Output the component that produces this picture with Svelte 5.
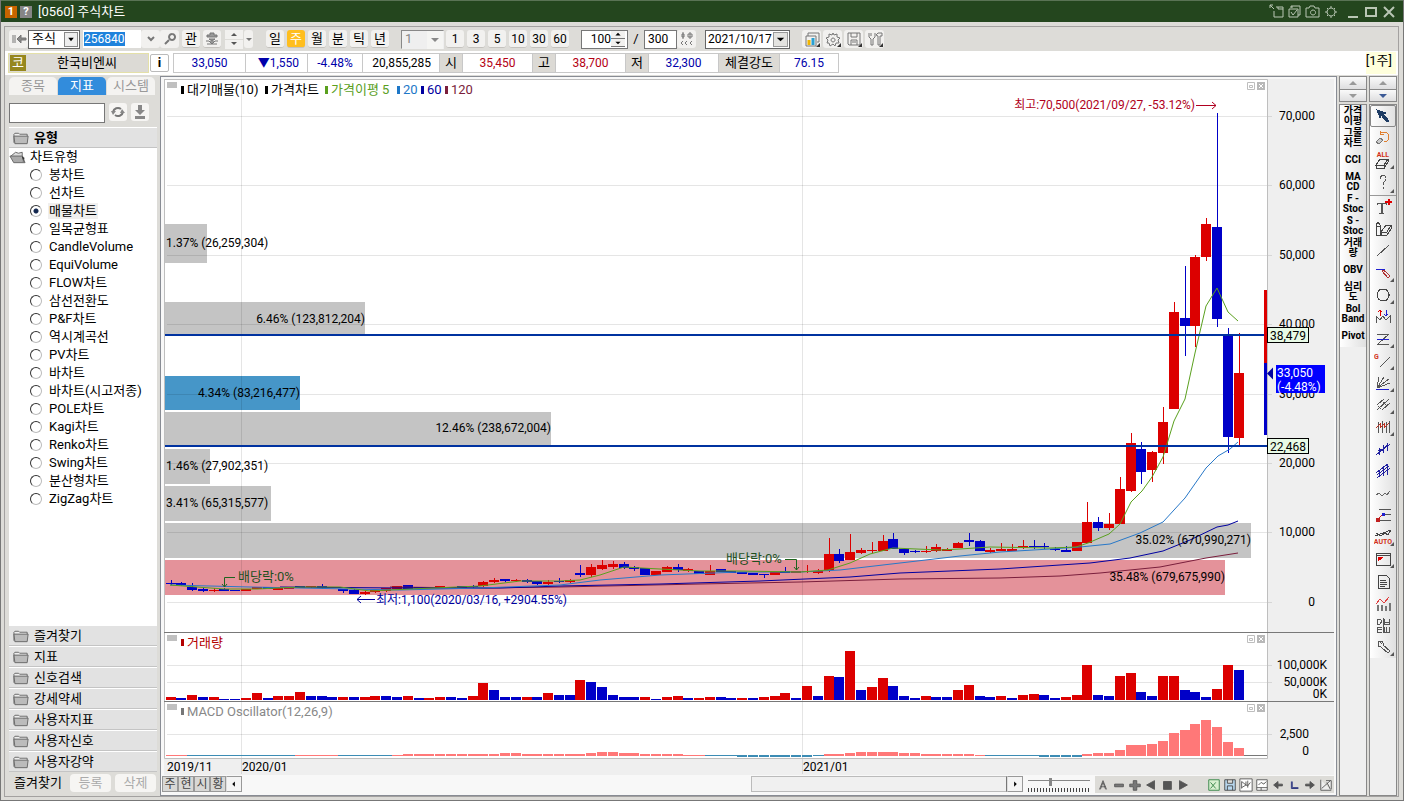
<script lang="ts">
	type Shape = [string, string, string?];
	type Tool = { name: string; shapes: Shape[]; more?: boolean; text?: string; textY?: number; active?: boolean };

	const RED = '#dc0000';
	const BLUE = '#0000c8';

	let selectedType = '매물차트';
	let code = '256840';
	let keyword = '';
	let barCount = '100';
	let maxCount = '300';
	let zoom = 36;

	const chartTypes = [
		'봉차트', '선차트', '매물차트', '일목균형표', 'CandleVolume', 'EquiVolume', 'FLOW차트',
		'삼선전환도', 'P&F차트', '역시계곡선', 'PV차트', '바차트', '바차트(시고저종)', 'POLE차트',
		'Kagi차트', 'Renko차트', 'Swing차트', '분산형차트', 'ZigZag차트'
	];
	const groups = ['즐겨찾기', '지표', '신호검색', '강세약세', '사용자지표', '사용자신호', '사용자강약'];
	const periods = ['일', '주', '월', '분', '틱', '년'];
	const minutes = ['1', '3', '5', '10', '30', '60'];
	const indicators = [
		'가격\n이평', '그물\n차트', 'CCI', 'MA\nCD', 'F -\nStoc', 'S -\nStoc', '거래\n량', 'OBV', '심리\n도', 'Bol\nBand', 'Pivot'
	];

	// colour, high, body top, body bottom, low
	const candles = `
B580,583,584,585 B582,583,585,586 B583,587,590,591 B588,589,591,592 R588,590,591,592
B588,589,591,591 B590,590,591,591 R589,589,591,591 R587,587,589,589 B587,587,589,589
R587,588,590,590 R587,587,589,589 B586,586,588,588 R586,586,587,588 B584,586,588,589
R587,587,588,588 B589,589,591,593 B589,590,594,594 R591,592,594,595 R590,590,592,593
R588,588,591,592 R586,586,589,589 B585,585,589,589 B587,587,588,588 R587,587,588,588
R586,586,588,588 B587,587,588,588 B586,586,588,588 B585,586,587,588 R581,582,586,587
R578,580,582,583 B579,579,581,582 R579,580,581,582 B579,580,582,583 B581,581,584,585
R580,582,584,585 B578,581,582,583 R579,580,582,583 B565,573,575,577 R564,567,575,577
R560,565,569,570 R561,564,567,569 B562,564,568,569 B566,567,569,571 B568,568,575,575
R571,571,575,575 R566,567,572,572 B564,567,570,572 R568,569,571,572 B571,571,574,574
R565,571,575,575 B569,569,572,572 B571,571,573,573 B572,572,574,574 B573,573,575,575
B574,574,575,578 R572,572,575,575 B567,571,573,573 R571,571,573,573 R565,571,572,573
R569,571,573,574 R538,554,570,572 B549,554,561,563 R534,552,560,560 R548,550,553,554
R542,550,551,553 R535,541,551,551 B533,539,549,549 B549,549,553,555 B550,551,552,553
R546,551,552,553 R544,547,551,552 R548,549,551,551 R542,543,548,548 B533,540,542,546
B540,541,551,551 R548,550,552,553 R543,549,551,551 R544,549,551,551 R540,546,548,549
B540,546,547,549 B543,546,547,549 B547,549,550,551 B546,550,552,552 R542,542,551,551
R502,522,543,543 B517,522,528,531 R513,524,528,530 R477,489,524,524 R433,443,491,492
B442,449,472,484 R451,452,470,482 R407,422,453,464 R302,312,409,409 B266,318,326,356
R255,257,326,347 R218,224,257,261 B113,227,319,327 B328,335,437,453 R333,373,438,445`
		.trim()
		.split(/\s+/)
		.map((s) => ({ up: s[0] === 'R', v: s.slice(1).split(',').map(Number) }));

	const volumes = `R3 B2 R5 B3 R3 B1 B1 R2 R7 B2 R4 R4 R8 B4 B4 B3 R3 B3 R3 R4 B4 B3 R4 B2 R2
R3 B3 B2 R4 R17 B10 B3 B3 R3 B3 R7 B5 B5 R20 B18 B13 B5 B3 B3 R3 B1 R3 R4 B2 R2
R3 B3 B2 R2 B2 R3 R4 R7 B2 R14 B4 R24 B23 R49 B10 R13 R22 B14 B4 B2 R4 B3 B3 R10 R15
B4 B3 R4 B2 R5 R6 B5 B2 R3 R5 R35 B5 B4 R24 R27 B8 B4 R24 R24 B10 B8 B3 R11 R35 B30`
		.split(/\s+/)
		.map((s) => ({ up: s[0] === 'R', h: +s.slice(1) }));

	// bar heights, negative below the zero line
	const oscillator = [
		1, 1, -1, -1, -1, -1, -1, -1, -1, -1, -1, -1, 1, 1, 1, 1, -1, -1, -1, -1,
		-1, 1, 2, 2, 2, 2, 2, 2, 2, 2, 2, 3, 3, 2, 2, 2, 2, 2, 2, 3,
		4, 4, 3, 3, 2, 2, 2, 2, 1, 1, -1, -1, -1, -2, -2, -2, -2, -2, -2, -2,
		-1, 2, 2, 3, 4, 4, 4, 4, 3, 3, 2, 2, 2, 2, 2, 1, -1, -1, -1, -1,
		-1, -2, -2, -2, -2, 2, 3, 3, 6, 11, 11, 12, 15, 23, 26, 32, 36, 29, 14, 8
	];

	const profile = [
		{ y: 224, h: 39, end: 207, text: '1.37% (26,259,304)', color: '#c4c4c4' },
		{ y: 302, h: 34, end: 365, text: '6.46% (123,812,204)', color: '#c4c4c4' },
		{ y: 376, h: 34, end: 300, text: '4.34% (83,216,477)', color: '#4696c8' },
		{ y: 412, h: 33, end: 551, text: '12.46% (238,672,004)', color: '#c4c4c4' },
		{ y: 449, h: 35, end: 210, text: '1.46% (27,902,351)', color: '#c4c4c4' },
		{ y: 486, h: 35, end: 271, text: '3.41% (65,315,577)', color: '#c4c4c4' },
		{ y: 523, h: 35, end: 1251, text: '35.02% (670,990,271)', color: '#c4c4c4' },
		{ y: 560, h: 35, end: 1225, text: '35.48% (679,675,990)', color: '#e4929a' }
	];

	const averages = [
		['#7a1e3c', '390,587 480,588 560,587 700,584 800,582 900,579 1000,578 1060,576 1100,573 1160,567 1206,558 1238,553'],
		['#0000a0', '280,587 400,588 500,588 560,586 660,584 760,581 850,577 900,573 1000,569 1090,563 1130,558 1163,551 1190,540 1217,527 1228,525 1238,521'],
		['#2878c8', '170,585 250,587 300,588 400,590 480,588 560,585 600,580 660,575 740,572 800,572 840,570 900,563 960,556 1000,552 1050,549 1080,547 1110,544 1140,533 1163,522 1185,498 1206,468 1218,456 1230,449 1238,442'],
		['#5aa01e', '170,585 224,589 257,589 300,587 340,587 370,591 410,589 480,586 520,581 560,581 580,580 600,575 624,567 660,569 700,571 740,571 800,572 828,570 850,563 870,554 893,548 940,550 960,549 990,547 1050,548 1076,547 1088,543 1109,534 1120,524 1131,502 1142,491 1152,477 1163,457 1174,421 1185,399 1195,353 1206,306 1217,288 1228,312 1238,321']
	];

	const legend = [
		{ x: 181, tx: 187, text: '대기매물(10)', color: '#000' },
		{ x: 265, tx: 271, text: '가격차트', color: '#000' },
		{ x: 325, tx: 331, text: '가격이평 5', color: '#5aa01e' },
		{ x: 397, tx: 403, text: '20', color: '#1e78c8' },
		{ x: 421, tx: 427, text: '60', color: '#0000a0' },
		{ x: 445, tx: 451, text: '120', color: '#7a1e3c' }
	];

	const prices = [70, 60, 50, 40, 30, 20, 10, 0].map((p, i) => ({
		text: p ? p + ',000' : '0',
		y: Math.round(116 + i * 69.4)
	}));

	const left = (i: number) => Math.round(165.5 + i * 10.788);

	const tools: Tool[] = [
		{ name: '선택', active: true, shapes: [['#1e3c64', 'M3 3l9 3-3 1 6 7-2 1-6-7-1 3z', '#1e3c64']] },
		{ name: '되돌리기', shapes: [['#e08030', 'M6 5a5 5 0 1 1 4 8M6 5l0-3M6 5l4 0'], ['#777', 'M2 13l4-4 3 2-4 4z', '#ccc']] },
		{ name: '전체 지우기', more: true, text: 'ALL', textY: 6, shapes: [['#444', 'M2 14l4-6h8l-4 6zM2 14v3h8v-3M10 17l4-6v-3']] },
		{ name: '도움말', more: true, shapes: [['#555', 'M6 6c0-5 7-4 6 0c0 2-3 2-3 6M9 14v2']] },
		{ name: '문자', shapes: [['#555', 'M3 7V5h9v2M7 5v10M8 5v10M5 15h5'], ['#e00000', 'M14 1v6M15 1v6M11 4h7M11 3h7']] },
		{ name: '지우개', shapes: [['#444', 'M2 5l2-3 2 3v10H2zM2 6h4M7 12l5-7h5l-4 7zM7 12v3h6l4-6V5']] },
		{ name: '추세선', shapes: [['#555', 'M3 14L15 3']] },
		{ name: '수평선', more: true, shapes: [['#2020d0', 'M2 5h9'], ['#b03030', 'M8 7l2-1 6 6-2 2zM9 9l2-2']] },
		{ name: '원', more: true, shapes: [['#444', 'M9 3a6 6 0 1 0 .1 0']] },
		{ name: '파동', shapes: [['#555', 'M2 15V8l4 4 3-4 3 4 4-4v7'], ['#e00000', 'M6 8V2M4 4l2-2 2 2'], ['#2020d0', 'M12 2v6M10 6l2 2 2-2']] },
		{ name: '회귀선', more: true, shapes: [['#555', 'M3 4h12M3 14h12M4 14L15 4'], ['#2020d0', 'M3 9h12']] },
		{ name: '각도선', more: true, text: 'G', textY: 7, shapes: [['#555', 'M6 15L16 5']] },
		{ name: '부채선', more: true, shapes: [['#555', 'M3 14L5 3M3 14L10 3M3 14L15 5M3 14L16 9'], ['#2020d0', 'M2 15h13']] },
		{ name: '평행선', more: true, shapes: [['#555', 'M3 9l7-6M3 14L15 3M8 14l8-7M4 10l3 3M9 6l3 3']] },
		{ name: '시간대', more: true, shapes: [['#555', 'M4 4v11M8 3v12M12 4v11M15 3v12'], ['#c03020', 'M2 10l4-4v4l4-4v4l5-5']] },
		{ name: '채널', shapes: [['#2020a0', 'M2 15L16 4M5 8v7M9 5v8M13 3v8M4 11l5-2 5-5']] },
		{ name: '이중 채널', shapes: [['#2020a0', 'M2 11L14 2M3 16L16 6M5 8v7M9 4v10M13 3v10M3 13L15 4']] },
		{ name: '지그재그', shapes: [['#666', 'M2 11l3-2 3 3 3-3 2 2 3-4']] },
		{ name: '되돌림', shapes: [['#555', 'M5 3h12M9 8h8M6 14h11'], ['#2020d0', 'M8 7h2v2H8z', '#2020d0'], ['#c02020', 'M2 12h3v3H2zM5 12l3-3', '#c02020']] },
		{ name: '자동 추세', more: true, text: 'AUTO', textY: 16, shapes: [['#444', 'M1 8l8-3 8-3M2 5l3 2 3 0 3-2 3 2 3-5']] },
		{ name: '창', more: true, shapes: [['#444', 'M2 3h14v12H2zM2 5h14'], ['#e00000', 'M4 7h5l-5 4z', '#e00000']] },
		{ name: '메모', shapes: [['#444', 'M5 3h7l3 3v10H4V5zM6 8h6M6 10h7M6 12h7M6 14h5']] },
		{ name: '통계', shapes: [['#777', 'M3 11h1v5h-1zM7 11h1v5h-1zM11 12h1v4h-1zM15 9h1v7h-1z', '#777'], ['#e04040', 'M2 10l4-5 4 4 5-6']] },
		{ name: '일주월', shapes: [['#555', 'M3 3h3l2 2-2 3H3zM10 3v5h5V3M10 6h5M3 11h5M3 13h5M3 16h5M3 11v5M10 11v5h5v-5M12 11v5M9 2v15']] },
		{ name: '설정', more: true, shapes: [['#555', 'M7 3a3 3 0 1 0 0 6l7 6 2-2-7-6a3 3 0 0 0-2-4zM5 3l3 3']] }
	];

	const topIcons: [string, string][] = [
		['내보내기', 'M1 1l4 4M1 1h3M1 1v3M5 7v6h9V3H7M9 3v2h5'],
		['복사', 'M4 4V2h9v9h-2M2 5h9v8H2zM4 8l2 3 4-5M5 2v2'],
		['캡처', 'M1 4h3l1-2h4l1 2h4v9H1zM8 6a2.5 2.5 0 1 0 .1 0'],
		['설정', 'M8 4a4 4 0 1 0 .1 0M8 2v2M8 12v2M2 8h2M12 8h2M4 4l1 1M11 11l1 1M12 4l-1 1M5 11l-1 1']
	];

	const setupIcons: [string, string][] = [
		['차트 목록', 'M4 5V2h11v9h-2M2 5h10v10H2z'],
		['환경 설정', 'M8 2l1 2 3-1v3l3 1-2 2 1 3h-3l-1 3-2-2-3 2-1-3H2l1-3-2-2 3-1V3l3 1zM8 7a2 2 0 1 0 .1 0'],
		['저장', 'M2 2h12v12H3l-1-1zM5 2v4h6V2M5 14V9h6v5M6 11h4'],
		['도구', 'M2 2v4l2 2v6h2V8l2-2V2M4 2v3M9 4l2-2h4v3h-2v9h-2V5z']
	];

	const navIcons: [string, string, string][] = [
		['글자', 'M4 13L8 3l4 10M6 10h5M5 13L8 5l3 8', 'none'],
		['축소', 'M3 7h10v3H3z', '#777'],
		['확대', 'M6 3h4v4h4v3h-4v4H6v-4H2V7h4z', '#777'],
		['이전', 'M12 3v10L3 8z', '#555'],
		['정지', 'M4 4h9v9H4z', '#555'],
		['재생', 'M4 3v10l9-5z', '#555']
	];
	const fileIcons: Shape[] = [
		['#2f8040', 'M2 2h12v12H2zM4 5l6 7M10 5l-6 7', '#d8f0d0'],
		['#444', 'M2 2h12v12H2zM5 2v4h6V2M5 14V9h6v5', '#b8d8f0'],
		['#555', 'M1 1h14v14H1zM3 12V4l5 4V4M10 3v8M3 11l5-3 2 1 3-4', '#fff'],
		['#555', 'M2 2h12v12H2zM2 11h12M7 11v3M4 8l3-3 3 2 3-3', '#fff'],
		['#555', 'M8 4L3 8l5 4V9h5V7H8z', '#555'],
		['#1e2878', 'M5 4v8h8M6 4v7h7', 'none'],
		['#555', 'M8 4l5 4-5 4V9H3V7h5z', '#555'],
		['#555', 'M2 2v12h12M3 12L13 3M8 3h6v10M9 5l4 8', '#eee']
	];
</script>

<div class="window">
	<header class="titlebar">
		<span class="badge num">1</span>
		<span class="badge help">?</span>
		<h1>[0560] 주식차트</h1>
		<div class="window-controls">
			{#each topIcons as [name, d]}
				<button aria-label={name}><svg viewBox="0 0 16 16"><path {d} /></svg></button>
			{/each}
			<button class="wide" aria-label="최소화"><svg viewBox="0 0 16 16"><path d="M3 13h10" stroke-width="2" /></svg></button>
			<button class="wide" aria-label="최대화"><svg viewBox="0 0 16 16"><path d="M3 4h10v8H3z" stroke-width="2" /></svg></button>
			<button class="wide" aria-label="닫기"><svg viewBox="0 0 16 16"><path d="M3 3l10 10M13 3L3 13" stroke-width="2" /></svg></button>
		</div>
	</header>

	<main class="frame">
		<div class="toolbar">
			<button class="flat" aria-label="처음으로"><svg viewBox="0 0 16 16"><path d="M2 4v8M4 4v8M6 8l4-4v3h5v2h-5v3z" fill="#888" /></svg></button>
			<span class="combo market">
				<select aria-label="종목 구분"><option>주식</option></select>
				<svg class="arrow boxed" viewBox="0 0 12 14"><path d="M3 5h6l-3 4z" /></svg>
			</span>
			<span class="code"><input aria-label="종목 코드" bind:value={code} style:width="{code.length * 6 + 2}px" /></span>
			<button class="flat" aria-label="종목 목록"><svg viewBox="0 0 16 16"><path d="M5 6l3 3 3-3" stroke-width="2" /></svg></button>
			<button class="flat" aria-label="종목 찾기"><svg viewBox="0 0 16 16"><path d="M10 3a3 3 0 1 0 .1 0M7 9l-4 4" stroke-width="2" /></svg></button>
			<button class="key gap">관</button>
			<button class="key" aria-label="종목 정보"><svg viewBox="0 0 16 16"><path d="M6 2h4v2h3v2H3V4h3zM5 8h6l-3 2zM2 10h3l3 3 3-3h3M3 13h10" fill="#999" /></svg></button>
			<span class="steps">
				<button aria-label="이전 종목"><svg viewBox="0 0 16 8"><path d="M5 6h6L8 3z" fill="#555" /></svg></button>
				<button aria-label="다음 종목"><svg viewBox="0 0 16 8"><path d="M5 2h6L8 5z" fill="#555" /></svg></button>
			</span>
			<button class="narrow" aria-label="종목 이동 옵션"><svg viewBox="0 0 8 16"><path d="M1 7h6L4 10z" fill="#777" /></svg></button>

			<div class="keys">
				{#each periods as period}
					<button class="key" class:on={period === '주'}>{period}</button>
				{/each}
			</div>
			<span class="combo unit">
				<select aria-label="주기" disabled><option>1</option></select>
				<svg class="arrow" viewBox="0 0 14 15"><path d="M3 6h8l-4 4z" /></svg>
			</span>
			<div class="keys minutes">
				{#each minutes as minute}
					<button class="key">{minute}</button>
				{/each}
			</div>
			<span class="spinner">
				<input aria-label="표시 개수" bind:value={barCount} />
				<span class="spin">
					<button aria-label="늘리기"><svg viewBox="0 0 14 8"><path d="M4 5h6L7 2z" /></svg></button>
					<button aria-label="줄이기"><svg viewBox="0 0 14 8"><path d="M4 3h6L7 6z" /></svg></button>
				</span>
			</span>
			<span class="slash">/</span>
			<input class="max" aria-label="전체 개수" bind:value={maxCount} />
			<button class="flat" aria-label="봉 더보기"><svg viewBox="0 0 16 16"><path d="M4 1v7M3 3h2v3H3zM11 1v7M9 3h4v3H9zM4 10l-2 2 2 2M8 10l-2 2 2 2M13 10l-2 2 2 2" /></svg></button>
			<span class="combo date">
				<select aria-label="기준일"><option>2021/10/17</option></select>
				<svg class="arrow raised" viewBox="0 0 14 14"><path d="M3 5h8l-4 4z" /></svg>
			</span>
			<div class="setup">
				{#each setupIcons as [name, d], i}
					<button class="flat" aria-label={name}>
						<svg viewBox="0 0 16 16">
							<path {d} />
							{#if i === 0}<path class="gold" d="M5 14V9" /><path class="cyan" d="M9 14V7" />{/if}
							<path class="corner" d="M16 12v4h-4z" />
						</svg>
					</button>
				{/each}
			</div>
		</div>

		<div class="quote">
			<div class="stock"><span class="market-mark">코</span><strong>한국비엔씨</strong></div>
			<button class="info" aria-label="종목 상세">i</button>
			<table>
				<tbody>
					<tr>
						<td class="c72 down">33,050</td>
						<td class="c62 down end">▼1,550</td>
						<td class="c55 down">-4.48%</td>
						<td class="c77 end">20,855,285</td>
						<th scope="row">시</th>
						<td class="c70 up">35,450</td>
						<th scope="row">고</th>
						<td class="c70 up">38,700</td>
						<th scope="row">저</th>
						<td class="c70 down">32,300</td>
						<th scope="row" class="c61">체결강도</th>
						<td class="c59 down">76.15</td>
					</tr>
				</tbody>
			</table>
			<span class="period">[1주]</span>
		</div>

		<div class="body">
			<aside class="sidebar">
				<nav class="tabs">
					<button>종목</button>
					<button class="active">지표</button>
					<button>시스템</button>
				</nav>
				<div class="search">
					<input aria-label="지표 검색" bind:value={keyword} />
					<button aria-label="새로고침"><svg viewBox="0 0 16 16"><path d="M3 8a5 5 0 0 1 8-3M13 8a5 5 0 0 1-8 3" stroke-width="2" /><path class="solid" d="M1 7h5l-3 4zM10 9h5l-3-4z" /></svg></button>
					<button aria-label="내려받기"><svg viewBox="0 0 16 16"><path class="solid" d="M6 1h4v5h3l-5 5-5-5h3zM3 12h10v3H3z" /></svg></button>
				</div>
				<h2 class="group">
					{@render folder()}유형
				</h2>
				<div class="tree">
					<div class="root">
						<svg class="folder" viewBox="0 0 18 14"><path d="M2 6l5-4 3 1 4-1v4" fill="#ddd" /><path d="M1 6h13l3 7H5z" fill="#aaa" /><path d="M14 6l2 2-1 4" /></svg>
						차트유형
					</div>
					{#each chartTypes as type}
						<label class:picked={type === selectedType}>
							<input type="radio" name="chart-type" value={type} bind:group={selectedType} />
							<span>{type}</span>
						</label>
					{/each}
				</div>
				{#each groups as group}
					<button class="group">{@render folder()}{group}</button>
				{/each}
				<div class="favorite">
					<span>즐겨찾기</span>
					<button disabled>등록</button>
					<button disabled>삭제</button>
				</div>
			</aside>

			<section class="chart">
				<svg class="plot" viewBox="164 79 1170 696" role="img" aria-label="한국비엔씨 주봉 차트">
					<rect x="164" y="79" width="1170" height="696" fill="#efefef" />
					<rect x="165" y="80" width="1102" height="678" fill="#fff" />

					<!-- volume profile -->
					{#each profile as p}
						<rect x="165" y={p.y} width={p.end - 165} height={p.h} fill={p.color} />
					{/each}

					<g class="grid">
						<path d="M241.5 80V774M802.5 80V774" />
						{#each prices as p}
							<path d="M167 {p.y + 0.5}H1272" />
						{/each}
						<path d="M167 665.5H1272M167 682.5H1272M167 734.5H1272" />
					</g>
					<path class="edge" d="M164.5 79V758.5H1267.5V79.5H164" />
					<path class="split" d="M164 632.5H1334M164 701.5H1334" />

					<g shape-rendering="crispEdges">
						{#each candles as c, i}
							<rect x={left(i) + 5} y={c.v[0]} width="1" height={c.v[3] - c.v[0]} fill={c.up ? RED : BLUE} />
							<rect x={left(i)} y={c.v[1]} width="10" height={c.v[2] - c.v[1]} fill={c.up ? RED : BLUE} />
						{/each}
						{#each volumes as v, i}
							<rect x={left(i)} y={700 - v.h} width="10" height={v.h} fill={v.up ? RED : BLUE} />
						{/each}
						<path class="zero" d="M1244 755.5H1267" />
						{#each oscillator as o, i}
							<rect
								x={left(i)}
								y={o > 0 ? 756 - o : 755}
								width={Math.abs(o) > 1 ? 10 : 11}
								height={Math.abs(o)}
								fill={o > 0 ? '#ff7878' : '#3c8cb4'}
							/>
						{/each}
					</g>

					{#each averages as [color, points]}
						<polyline class="average" {points} stroke={color} />
					{/each}
					<path class="level" d="M165 335H1268M165 446H1268" />
					<rect x="1264" y="290" width="3" height="73" fill={RED} />
					<rect x="1264" y="363" width="3" height="72" fill={BLUE} />

					<g class="text">
						{#each profile as p}
							{#if p.end < 280}
								<text x="166" y={Math.floor(p.y + p.h / 2) + 4}>{p.text}</text>
							{:else}
								<text x={p.end} y={Math.floor(p.y + p.h / 2) + 4} text-anchor="end">{p.text}</text>
							{/if}
						{/each}
						{#each prices as p}
							<text x="1315" y={p.y + 4} text-anchor="end">{p.text}</text>
						{/each}
						<text x="1327" y="669" text-anchor="end">100,000K</text>
						<text x="1327" y="686" text-anchor="end">50,000K</text>
						<text x="1327" y="698" text-anchor="end">0K</text>
						<text x="1309" y="738" text-anchor="end">2,500</text>
						<text x="1309" y="755" text-anchor="end">0</text>
						<text x="167" y="771">2019/11</text>
						<text x="242" y="771">2020/01</text>
						<text x="803" y="771">2021/01</text>
					</g>

					<g class="text label">
						{#each legend as l}
							<rect x={l.x} y="86" width="3" height="8" fill={l.color} />
							<text x={l.tx} y="94" fill={l.color}>{l.text}</text>
						{/each}
						<rect x="181" y="639" width="3" height="7" fill="#b40000" />
						<text x="187" y="647" fill="#b40000">거래량</text>
						<rect x="181" y="708" width="3" height="7" fill="#777" />
						<text x="187" y="716" fill="#888">MACD Oscillator(12,26,9)</text>
						<text x="238" y="581" fill="#1e501e">배당락:0%</text>
						<text x="726" y="563" fill="#1e501e">배당락:0%</text>
					</g>
					<g class="text">
						<text x="1195" y="109" text-anchor="end" fill="#b00020">최고:70,500(2021/09/27, -53.12%)</text>
						<text x="376" y="604" fill="#0000a0">최저:1,100(2020/03/16, +2904.55%)</text>
					</g>
					<path class="mark" stroke="#b00020" d="M1196 105.5H1216M1212 102l4 3.5-4 3.5" />
					<path class="mark" stroke="#0000a0" d="M375 599.5H357M361 596l-4 3.5 4 3.5" />
					<path class="mark" stroke="#1e641e" d="M235 577.5H224.5V587M222 584l2.5 3 2.5-3M785 559.5H796.5V570M794 567l2.5 3 2.5-3" />

					<rect class="tag" x="1267.5" y="327.5" width="41" height="15" />
					<rect class="tag" x="1267.5" y="438.5" width="41" height="15" />
					<path d="M1267 373.5l6-6v12z" fill="#0000a0" />
					<rect x="1276" y="365" width="49" height="28" fill="#0000ff" />
					<g class="text">
						<text x="1270" y="340">38,479</text>
						<text x="1270" y="451">22,468</text>
						<text x="1277" y="377" fill="#fff">33,050</text>
						<text x="1277" y="391" fill="#fff">(-4.48%)</text>
					</g>

					{#each [82, 635, 704] as y}
						<rect x="167" {y} width="10" height="6" fill="#c0c0c0" />
						<path class="pane" d="M1247.5 {y + 0.5}h7v7h-7zM1249.5 {y + 3.5}h3v2h-3z" />
						<rect x="1257" {y} width="8" height="8" fill="#b8b8b8" />
						<path d="M1259 {y + 2}l4 4m0-4l-4 4" stroke="#fff" />
					{/each}
				</svg>

				<footer class="scroll">
					{#each ['주', '현', '시', '황'] as mode}
						<button class="mode">{mode}</button>
					{/each}
					<button class="step" aria-label="왼쪽으로"><svg viewBox="0 0 16 16"><path d="M9 5v6L6 8z" fill="#000" /></svg></button>
					<div class="track"><span class="rest"></span><span class="thumb"></span></div>
					<button class="step" aria-label="오른쪽으로"><svg viewBox="0 0 16 16"><path d="M7 5v6l3-3z" fill="#000" /></svg></button>
					<input type="range" aria-label="확대 비율" min="0" max="100" bind:value={zoom} />
					<div class="nav">
						{#each navIcons as [name, d, fill]}
							<button aria-label={name}><svg viewBox="0 0 16 16"><path {d} {fill} stroke="#555" /></svg></button>
						{/each}
					</div>
					<div class="files">
						{#each fileIcons as [stroke, d, fill], i}
							<button aria-label="차트 도구 {i + 1}"><svg viewBox="0 0 16 16"><path {d} {fill} {stroke} /></svg></button>
						{/each}
					</div>
				</footer>
			</section>

			<aside class="strip">
				{@render pager('지표', false)}
				<div class="strip-body">
					<div class="names">
						{#each indicators as name}
							<button>{name}</button>
						{/each}
					</div>
				</div>
			</aside>

			<aside class="strip tools">
				{@render pager('도구', true)}
				<div class="strip-body">
					<div class="names">
						{#each tools as tool, i}
							<button class:active={tool.active} class:ruled={i === 3} aria-label={tool.name}>
								<svg viewBox="0 0 18 18" shape-rendering="crispEdges">
									{#each tool.shapes as [stroke, d, fill]}
										<path {d} {stroke} fill={fill ?? 'none'} />
									{/each}
									{#if tool.text}
										<text x={tool.text === 'G' ? 0 : 9} y={tool.textY} text-anchor={tool.text === 'G' ? 'start' : 'middle'}>{tool.text}</text>
									{/if}
								</svg>
								{#if tool.more}<i></i>{/if}
							</button>
						{/each}
					</div>
				</div>
			</aside>
		</div>
	</main>
</div>

{#snippet folder()}
	<svg class="folder" viewBox="0 0 18 14"><path d="M1 12V3l1-1h4l1 1h8v2" fill="#eee" /><path d="M1 5h15l-1 8H2z" fill="#bbb" /></svg>
{/snippet}

{#snippet pager(name, lit)}
	<div class="pager">
		<button aria-label="{name} 위로"><svg viewBox="0 0 16 10"><path d="M4 7h8L8 3z" fill="#999" /></svg></button>
		<button aria-label="{name} 아래로"><svg viewBox="0 0 16 10"><path d="M4 3h8L8 7z" fill={lit ? '#3c5a96' : '#999'} /></svg></button>
	</div>
{/snippet}

<style>
	:global(body) {
		margin: 0;
		background: #dcdad5;
	}

	.window {
		min-height: 100vh;
		display: flex;
		flex-direction: column;
		box-sizing: border-box;
		background: #dddcd8;
		border-left: 1px solid #777;
		border-right: 1px solid #777;
		border-bottom: 1px solid #777;
		font-family: Roboto, 'Noto Sans CJK KR', sans-serif;
		font-size: 13px;
		line-height: 16px;
		color: #000;
	}

	.window *,
	.window *::before {
		box-sizing: border-box;
	}

	button,
	input,
	select {
		margin: 0;
		padding: 0;
		border: 0;
		border-radius: 0;
		font: inherit;
		color: inherit;
		background: none;
	}

	svg {
		display: block;
	}

	button svg {
		width: 16px;
		height: 16px;
		fill: none;
		stroke: #777;
	}

	/* title bar */
	.titlebar {
		display: flex;
		align-items: center;
		gap: 3px;
		height: 22px;
		padding: 0 6px 0 4px;
		background: #24461e;
		border-top: 1px solid #5a7355;
		color: #fff;
	}

	.titlebar h1 {
		margin: 0 0 0 3px;
		font-size: 13px;
		font-weight: 400;
	}

	.badge {
		width: 12px;
		height: 12px;
		background: #858585;
		font-size: 11px;
		font-weight: 700;
		line-height: 12px;
		text-align: center;
	}

	.badge.num {
		background: #c86400;
	}

	.window-controls {
		display: flex;
		margin-left: auto;
		gap: 2px;
	}

	.window-controls button svg {
		stroke: #b9c6b4;
	}

	.window-controls button.wide:nth-of-type(5) {
		margin-left: 4px;
	}

	.frame {
		flex: 1;
		display: flex;
		flex-direction: column;
		margin: 4px 4px 3px 3px;
		border: 1px solid #a3a1a0;
	}

	/* toolbar */
	.toolbar {
		display: flex;
		align-items: center;
		height: 24px;
		padding-left: 4px;
	}

	.flat,
	.key,
	.narrow {
		display: flex;
		align-items: center;
		justify-content: center;
		height: 18px;
		background: #f2f1ef;
		border-radius: 3px;
	}

	.flat {
		width: 19px;
	}

	.key {
		width: 18px;
		border-bottom: 1px solid #c4c2be;
	}

	.key.gap {
		margin: 0 3px 0 3px;
	}

	.key.on {
		background: #ffbe1e;
		color: #fff;
	}

	.narrow {
		width: 9px;
		margin-left: 1px;
	}

	.narrow svg {
		width: 8px;
		stroke: none;
	}

	.combo {
		position: relative;
		height: 19px;
		border: 1px solid #666;
		background: #fff;
	}

	.combo select {
		display: block;
		width: 100%;
		height: 17px;
		padding-left: 3px;
		appearance: none;
	}

	.combo .arrow {
		position: absolute;
		top: 1px;
		right: 1px;
		width: 14px;
		height: 15px;
		pointer-events: none;
	}

	.combo .boxed {
		border: 1px solid #888;
		background: #eee;
	}

	.combo .raised {
		width: 15px;
		border: 1px solid #999;
		background: #e4e3e0;
	}

	.market {
		width: 52px;
	}

	.unit {
		width: 43px;
		margin-left: 12px;
		border-color: #888 transparent transparent #888;
		background: linear-gradient(90deg, #efefef 60%, #f5f5f3 60%);
	}

	.unit select,
	.unit .arrow {
		color: #888;
		fill: #888;
		opacity: 1;
	}

	.date {
		width: 85px;
		margin-left: 9px;
	}

	.combo.date select {
		padding-left: 2px;
		font-size: 12px;
	}

	.code {
		display: flex;
		align-items: center;
		width: 58px;
		height: 18px;
		margin-left: 3px;
		padding-left: 1px;
		background: #fff;
	}

	.code input {
		min-width: 41px;
		height: 14px;
		background: #1e82dc;
		color: #fff;
		font-size: 12px;
	}

	.steps {
		display: grid;
		gap: 1px;
		margin-left: 4px;
	}

	.steps button,
	.spin button {
		height: 9px;
		background: #f2f1ef;
	}

	.steps svg {
		width: 18px;
		height: 8px;
		stroke: none;
	}

	.keys {
		display: flex;
		gap: 3px;
		margin-left: 13px;
	}

	.keys.minutes {
		margin-left: 2px;
		font-size: 12px;
	}

	.spinner {
		display: flex;
		width: 47px;
		height: 19px;
		margin-left: 12px;
		border: 1px solid #777;
		background: #fff;
		font-size: 12px;
	}

	.spinner input {
		width: 29px;
		text-align: right;
	}

	.spin {
		display: grid;
	}

	.spin button {
		height: 8px;
		border-bottom: 1px solid #777;
	}

	.spin svg {
		width: 14px;
		height: 7px;
		fill: #000;
		stroke: none;
	}

	.slash {
		width: 16px;
		text-align: center;
	}

	.max {
		width: 33px;
		height: 19px;
		padding-left: 3px;
		border: 1px solid #777;
		background: #fff;
		font-size: 12px;
	}

	.setup {
		display: flex;
		gap: 2px;
		margin-left: 12px;
	}

	.corner {
		fill: #333;
		stroke: none;
	}

	.gold {
		stroke: #f0b400;
		stroke-width: 3;
	}

	.cyan {
		stroke: #28a0d2;
		stroke-width: 3;
	}

	/* quote line */
	.quote {
		display: flex;
		align-items: center;
		height: 24px;
		margin-bottom: 1px;
		padding: 0 2px 0 4px;
		background: #fff;
	}

	.stock {
		display: flex;
		align-items: center;
		width: 139px;
		height: 18px;
		padding-left: 1px;
		background: #dcdad5;
		outline: 1px solid #e4e0a8;
	}

	.stock strong {
		flex: 1;
		font-weight: 400;
		text-align: center;
	}

	.market-mark {
		width: 16px;
		height: 16px;
		background: #96871e;
		color: #fff;
		line-height: 15px;
		text-align: center;
	}

	.info {
		width: 19px;
		height: 18px;
		margin: 0 4px 0 2px;
		border: 1px solid #bbb;
		border-radius: 2px;
		font-weight: 700;
		line-height: 14px;
	}

	.quote table {
		border-collapse: collapse;
		table-layout: fixed;
		width: 665px;
	}

	.quote td,
	.quote th {
		height: 19px;
		padding: 0;
		border: 1px solid #c8c8c8;
		font-size: 12px;
		font-weight: 400;
		line-height: 16px;
		text-align: center;
	}

	.quote th {
		width: 23px;
		background: #dcdad5;
		font-size: 13px;
	}

	.quote td.end {
		padding-right: 8px;
		text-align: right;
	}

	.c55 { width: 55px; }
	.c59 { width: 59px; }
	.quote .c61 { width: 61px; }
	.c62 { width: 62px; }
	.c70 { width: 70px; }
	.c72 { width: 72px; }
	.c77 { width: 77px; }

	.up {
		color: #b40014;
	}

	.down {
		color: #0000aa;
	}

	.period {
		margin-left: auto;
		height: 22px;
		padding: 1px 4px 0 0;
		background: #ffffdc;
	}

	/* three working columns */
	.body {
		flex: 1;
		display: grid;
		grid-template-columns: 149px minmax(0, 1fr) 28px 28px;
		gap: 2px;
		padding: 0 1px 0 4px;
	}

	.sidebar {
		display: flex;
		flex-direction: column;
		padding: 1px 1px 0 0;
	}

	.tabs {
		display: grid;
		grid-template-columns: 48px 48px 48px;
		gap: 1px;
	}

	.tabs button {
		height: 18px;
		background: #f4f3f1;
		border-radius: 5px 5px 0 0;
		color: #999;
		line-height: 18px;
	}

	.tabs button.active {
		background: #328cdc;
		color: #fff;
	}

	.search {
		display: flex;
		gap: 4px;
		padding: 8px 0 4px;
	}

	.search input {
		width: 96px;
		height: 20px;
		border: 1px solid #777;
		background: #fff;
	}

	.search button {
		display: grid;
		place-items: center;
		width: 18px;
		height: 18px;
		background: #f6f5f3;
		border-radius: 3px;
	}

	.search .solid {
		fill: #888;
		stroke: none;
	}

	.group {
		display: flex;
		align-items: center;
		gap: 4px;
		height: 21px;
		margin: 0;
		padding-left: 4px;
		background: #e2e2e2;
		border-top: 1px solid #fff;
		border-bottom: 1px solid #c4c4c4;
		font-size: 13px;
		line-height: 16px;
		text-align: left;
	}

	.folder,
	.group .folder {
		width: 17px;
		height: 14px;
		stroke: #666;
	}

	.tree {
		flex: 1;
		background: #fff;
	}

	.root,
	.tree label {
		display: flex;
		align-items: center;
		height: 18px;
	}

	.root {
		gap: 4px;
	}

	.tree label {
		padding-left: 21px;
		gap: 6px;
	}

	.tree input {
		appearance: none;
		width: 12px;
		height: 12px;
		border: 1px solid #777;
		border-color: #333 #bbb #bbb #333;
		border-radius: 50%;
	}

	.tree input:checked {
		background: radial-gradient(#142850 0 2px, #fff 3px);
	}

	.tree span {
		padding: 0 1px;
		line-height: 16px;
	}

	.picked span {
		background: #f0efee;
	}

	.favorite {
		display: flex;
		align-items: flex-start;
		gap: 4px;
		height: 24px;
		padding: 2px 0 0 5px;
		line-height: 18px;
	}

	.favorite span {
		width: 52px;
	}

	.favorite button {
		width: 41px;
		height: 18px;
		background: #f6f5f3;
		border-radius: 4px;
		color: #aaa;
	}

	/* chart */
	.chart {
		padding: 2px 2px 0 3px;
		border: 1px solid #888c94;
		background: #f8f8f8;
	}

	.plot {
		width: 100%;
		height: auto;
	}

	.plot path {
		fill-rule: evenodd;
	}

	.grid path {
		fill: none;
		stroke: rgba(0, 0, 0, 0.1);
	}

	.edge,
	.pane {
		fill: none;
		stroke: #bebebe;
	}

	.split,
	.zero {
		stroke: #787878;
	}

	.average {
		fill: none;
		stroke-width: 1;
	}

	.level {
		stroke: #0032a0;
		stroke-width: 2;
	}

	.mark {
		fill: none;
	}

	.tag {
		fill: #e8fae6;
		stroke: #000;
	}

	.text {
		font-size: 12px;
	}

	.text.label {
		font-size: 13px;
	}

	.scroll {
		display: flex;
		height: 18px;
		margin-left: -2px;
		padding-top: 1px;
	}

	.mode {
		width: 16px;
		height: 16px;
		border: 1px solid #999;
		background: #d8d8d6;
		font-size: 12px;
		line-height: 14px;
		color: #444;
	}

	.step {
		width: 16px;
		height: 16px;
		border: 1px solid #999;
		border-left-color: #ddd;
		background: #f4f4f4;
	}

	.step svg {
		width: 14px;
		height: 14px;
		stroke: none;
	}

	.track {
		flex: 1;
		display: flex;
		height: 16px;
	}

	.rest {
		flex: 2;
	}

	.thumb {
		flex: 1;
		border: 1px solid #bbb;
		border-right-color: #777;
		background: #f0f0f0;
	}

	.scroll input {
		appearance: none;
		width: 62px;
		height: 16px;
		margin: 0 5px;
		background:
			repeating-linear-gradient(90deg, #444 0 1px, transparent 1px 3px) 0 100% / 100% 4px no-repeat,
			linear-gradient(#888, #888) 0 4px / 100% 1px no-repeat;
	}

	.scroll input::-webkit-slider-thumb {
		appearance: none;
		width: 3px;
		height: 8px;
		margin-top: -5px;
		background: #888;
	}

	.nav,
	.files {
		display: flex;
		background: #dddcd8;
	}

	.nav {
		padding-right: 15px;
	}

	.nav svg,
	.files svg {
		width: 16px;
		height: 14px;
	}

	/* right strips */
	.strip {
		display: flex;
		flex-direction: column;
		gap: 2px;
	}

	.pager {
		display: grid;
		border: 1px solid #888;
	}

	.pager button {
		display: grid;
		place-items: center;
		height: 12px;
		background: linear-gradient(#fafafa, #dededf);
	}

	.pager button + button {
		border-top: 1px solid #888;
	}

	.pager svg {
		height: 10px;
		stroke: none;
	}

	.strip-body {
		flex: 1;
		border: 1px solid #888;
		background: #efefef;
	}

	.names {
		display: flex;
		flex-direction: column;
		background: linear-gradient(90deg, #fff, #e0e0e0);
	}

	.names button {
		position: relative;
		display: grid;
		place-items: center;
		height: 22px;
		font-size: 10px;
		font-weight: 700;
		line-height: 10px;
		white-space: pre-line;
	}

	.tools .names svg {
		width: 18px;
		height: 18px;
	}

	.tools text {
		font-size: 7px;
		fill: #d23218;
		stroke: none;
	}

	.tools .active {
		border: 1px solid #888;
		border-radius: 2px;
	}

	.tools .ruled {
		height: 25px;
		padding-bottom: 2px;
		border-bottom: 1px solid #999;
	}

	.tools i {
		position: absolute;
		right: 2px;
		bottom: 2px;
		border: 2px solid #555;
		border-top-color: transparent;
		border-left-color: transparent;
	}
</style>
